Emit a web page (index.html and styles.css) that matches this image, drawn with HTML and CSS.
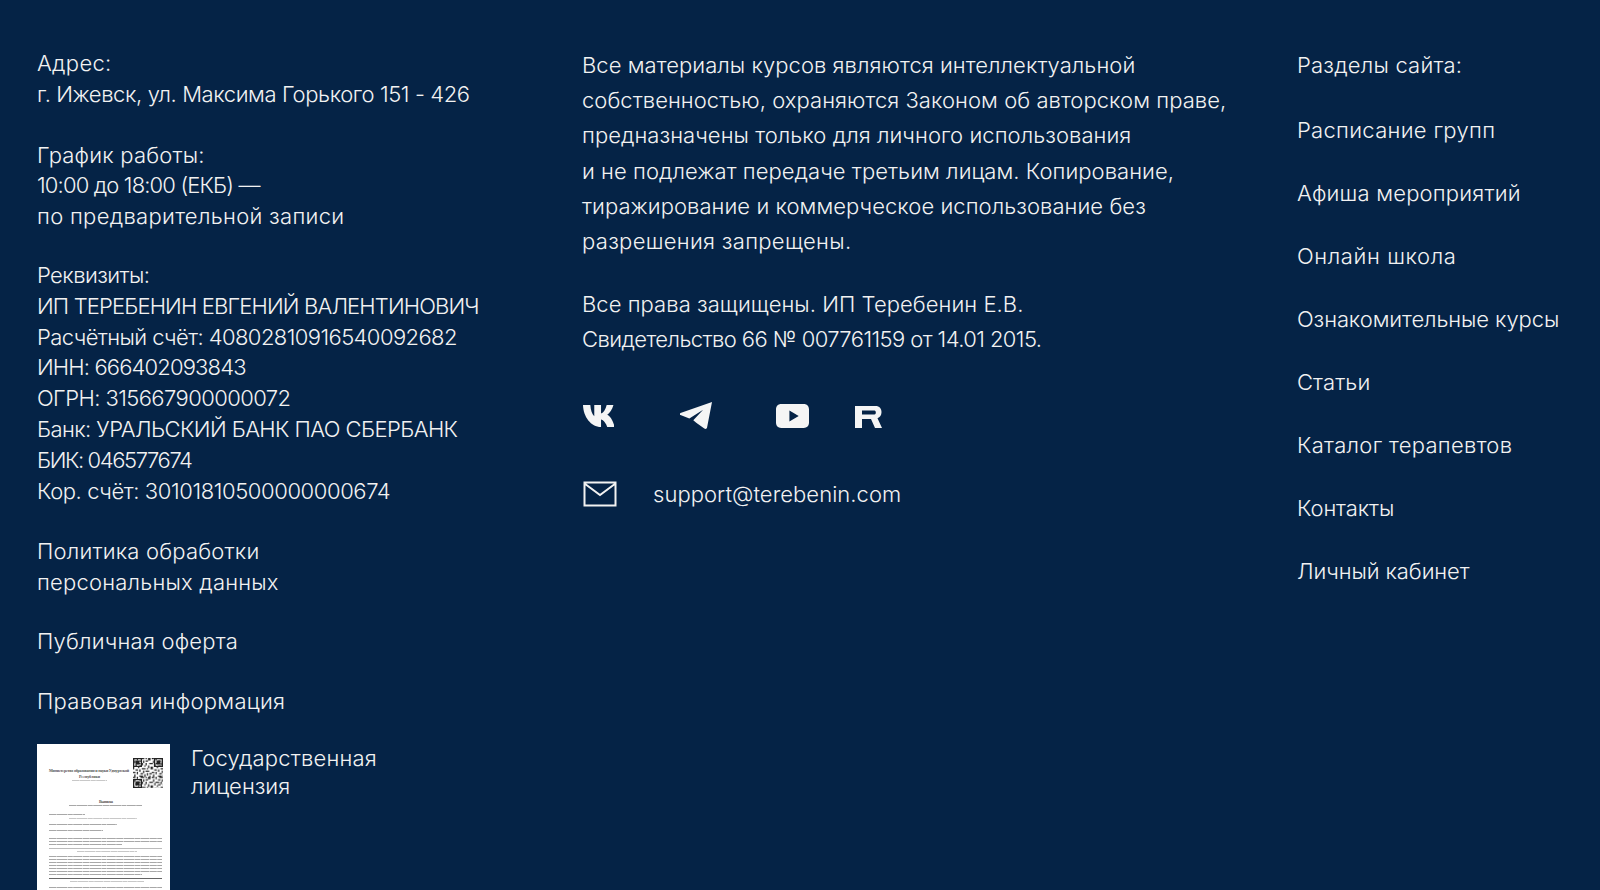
FILE: index.html
```html
<!DOCTYPE html>
<html lang="ru">
<head>
<meta charset="utf-8">
<title>Футер</title>
<link rel="stylesheet" href="styles.css">
</head>
<body>
<footer class="footer">
  <section class="col-left">
    <p class="block block-wide"><span class="ls-b">Адрес:</span><br><span class="ls-n">г. Ижевск, ул. Максима Горького 151 - 426</span></p>
    <p class="block block-narrow">График работы:<br><span class="ls-c">10:00 до 18:00 (ЕКБ) —</span><br><span class="ls-w">по предварительной записи</span></p>
    <p class="block block-wide"><span class="ls-m">Реквизиты:</span><br><span class="ls-c">ИП ТЕРЕБЕНИН ЕВГЕНИЙ ВАЛЕНТИНОВИЧ</span><br><span class="ls-m">Расчётный счёт: 40802810916540092682</span><br><span class="ls-c">ИНН: 666402093843</span><br><span class="ls-m">ОГРН: 315667900000072</span><br><span class="ls-m">Банк: УРАЛЬСКИЙ БАНК ПАО СБЕРБАНК</span><br><span class="ls-x">БИК: 046577674</span><br><span class="ls-n">Кор. счёт: 30101810500000000674</span></p>
    <p class="block block-narrow"><a href="#">Политика обработки<br>персональных данных</a></p>
    <p class="block"><a href="#">Публичная оферта</a></p>
    <p class="block block-last"><a href="#" class="ls-w">Правовая информация</a></p>
    <div class="license">
      <svg class="doc" viewBox="0 0 133 150" aria-hidden="true">
        <defs>
          <pattern id="qr" width="15" height="15" patternUnits="userSpaceOnUse" patternTransform="translate(96 14) scale(1.25)">
            <path d="M0 0h2v1H0zM3 0h1v2H3zM6 0h3v1H6zM10 0h1v1h-1zM12 0h2v2h-2zM1 2h1v2H1zM5 2h2v1H5zM8 2h1v2H8zM10 2h2v1h-2zM0 4h1v1H0zM3 4h3v1H3zM7 4h1v2H7zM10 4h1v2h-1zM13 4h2v1h-2zM2 5h1v2H2zM5 6h2v1H5zM9 6h1v1H9zM12 6h1v2h-1zM0 7h1v2H0zM4 7h1v1H4zM7 8h3v1H7zM11 8h1v1h-1zM14 7h1v2h-1zM2 9h2v1H2zM5 9h1v2H5zM10 10h3v1h-3zM8 10h1v2H8zM0 11h2v1H0zM3 11h1v2H3zM6 12h2v1H6zM11 12h1v2h-1zM13 12h2v1h-2zM1 13h1v2H1zM5 14h3v1H5zM9 13h1v2H9zM13 14h1v1h-1z" fill="#222"/>
          </pattern>
        </defs>
        <rect class="doc-paper" width="133" height="150"/>
        <text class="doc-title" x="12" y="28" textLength="80">Министерство образования и науки Удмуртской</text>
        <text class="doc-title" x="42" y="33.500" textLength="21">Республики</text>
        <line class="doc-line doc-soft" x1="35" x2="70" y1="36.500" y2="36.500"/>
        <text class="doc-title" x="62" y="59" textLength="14">Выписка</text>
        <line class="doc-line" x1="32" x2="105" y1="61.500" y2="61.500"/>
        <line class="doc-line" x1="12" x2="48" y1="70.500" y2="70.500"/>
        <line class="doc-line doc-soft" x1="32" x2="100" y1="74.500" y2="74.500"/>
        <line class="doc-line" x1="12" x2="80" y1="80.500" y2="80.500"/>
        <line class="doc-line" x1="12" x2="66" y1="86.500" y2="86.500"/>
        <line class="doc-line" x1="12" x2="125" y1="94.500" y2="94.500"/>
        <line class="doc-line" x1="12" x2="125" y1="97.500" y2="97.500"/>
        <line class="doc-line" x1="12" x2="85" y1="100.500" y2="100.500"/>
        <line class="doc-rule doc-rule-soft" x1="12" x2="125" y1="104.500" y2="104.500"/>
        <line class="doc-line doc-soft" x1="40" x2="100" y1="107.500" y2="107.500"/>
        <line class="doc-line" x1="12" x2="125" y1="112.500" y2="112.500"/>
        <line class="doc-line" x1="12" x2="125" y1="115.500" y2="115.500"/>
        <line class="doc-line" x1="12" x2="125" y1="118.500" y2="118.500"/>
        <line class="doc-line" x1="12" x2="125" y1="121.500" y2="121.500"/>
        <line class="doc-line" x1="12" x2="125" y1="124.500" y2="124.500"/>
        <line class="doc-line" x1="12" x2="125" y1="127.500" y2="127.500"/>
        <line class="doc-line" x1="12" x2="105" y1="130.500" y2="130.500"/>
        <line class="doc-rule" x1="12" x2="125" y1="134.500" y2="134.500"/>
        <line class="doc-line doc-soft" x1="33" x2="107" y1="137.500" y2="137.500"/>
        <line class="doc-line" x1="12" x2="125" y1="143.500" y2="143.500"/>
        <line class="doc-line" x1="12" x2="125" y1="146.500" y2="146.500"/>
        <line class="doc-line" x1="12" x2="125" y1="149.500" y2="149.500"/>
        <rect x="96" y="14" width="30" height="30" fill="url(#qr)"/>
        <path class="doc-finder" fill-rule="evenodd" d="M96 14h9v9h-9zm1.250 1.250v6.500h6.500v-6.500zM98.500 16.500h4v4h-4zM117 14h9v9h-9zm1.250 1.250v6.500h6.500v-6.500zM119.500 16.500h4v4h-4zM96 35h9v9h-9zm1.250 1.250v6.500h6.500v-6.500zM98.500 37.500h4v4h-4z"/>
      </svg>
      <a href="#" class="license-text">Государственная<br><span class="ls-zero">лицензия</span></a>
    </div>
  </section>
  <section class="col-mid">
    <p class="para">Все материалы курсов являются интеллектуальной<br>собственностью, охраняются Законом об авторском праве,<br>предназначены только для личного использования<br>и не подлежат передаче третьим лицам. Копирование,<br>тиражирование и коммерческое использование без<br><span class="ls-b">разрешения запрещены.</span></p>
    <p class="para">Все права защищены. ИП Теребенин Е.В.<br><span class="ls-m">Свидетельство 66 № 007761159 от 14.01 2015.</span></p>
    <div class="socials">
      <svg class="ic ic-vk" viewBox="1 2 27.500 20.500" preserveAspectRatio="none" aria-hidden="true"><path d="M1 2h6.500c.4 5 1.400 8.500 3.500 10.500V2h6v8c2.500-1 4-4 5-8h6c-1 4.500-3.500 7.500-5.500 9 2.500 1.500 5 4.500 6.500 11.500h-6.500c-1-3.500-3.500-6.500-5.500-7v7C8 22.500 1.300 13 1 2z" fill="#f5f5f5"/></svg>
      <svg class="ic ic-tg" viewBox="0.500 1 32.500 28" preserveAspectRatio="none" aria-hidden="true"><path d="M33 1 28 27.500c-.3 1.500-1.500 1.800-2.800 1L17 22.500 14 20 24 9 10 18 1 14.500C0 14 0 13 1 12.500z" fill="#f5f5f5"/></svg>
      <svg class="ic ic-yt" viewBox="1 1 32 22" preserveAspectRatio="none" aria-hidden="true"><path fill-rule="evenodd" d="M6 1h22c3 0 5 2 5 5v12c0 3-2 5-5 5H6c-3 0-5-2-5-5V6c0-3 2-5 5-5zm8 6v10l9-5z" fill="#f5f5f5"/></svg>
      <svg class="ic ic-r" viewBox="0 0 27 22" aria-hidden="true"><path fill-rule="evenodd" d="M0 0h20.500c4 0 6 2.500 6 6.300 0 3-1.500 5-4 6l4.500 9.700h-7l-4-9H7v9H0zm7 4.500v4h12.500c1.800 0 1.800-4 0-4z" fill="#f5f5f5"/></svg>
    </div>
    <a class="mail" href="#">
      <svg class="mail-ic" viewBox="0 0 34 26" aria-hidden="true"><path d="M1.500 1.500h31v23h-31zM1.500 2.500 17 14 32.500 2.500" fill="none" stroke="#f2f2f2" stroke-width="2"/></svg>
      <span>support@terebenin.com</span>
    </a>
  </section>
  <nav class="col-right">
    <p class="nav-title">Разделы сайта:</p>
    <a href="#" class="ls-p">Расписание групп</a>
    <a href="#">Афиша мероприятий</a>
    <a href="#" class="ls-o">Онлайн школа</a>
    <a href="#" class="ls-t">Ознакомительные курсы</a>
    <a href="#" class="ls-q">Статьи</a>
    <a href="#" class="ls-p">Каталог терапевтов</a>
    <a href="#" class="ls-t">Контакты</a>
    <a href="#" class="ls-t">Личный кабинет</a>
  </nav>
</footer>
</body>
</html>
```
FILE: styles.css
```css
* { box-sizing: border-box; }
html, body { margin: 0; height: 890px; overflow: hidden; }
body { background: #052346; color: #f2f2f2; font-family: "Inter", "Liberation Sans", sans-serif; font-weight: 300; font-size: 22px; }
a { color: inherit; text-decoration: none; }
p { margin: 0; }
.footer { display: grid; grid-template-columns: 545px 715px 1fr; padding: 48px 0 0 37px; height: 890px; }

.col-left { line-height: 30.800px; letter-spacing: .2px; }
.block { margin-bottom: 29px; }
.block-wide { margin-bottom: 30px; }
.block-narrow { margin-bottom: 28px; }
.block-last { margin-bottom: 27px; }

.ls-zero { letter-spacing: 0; }
.ls-b { letter-spacing: .3px; }
.ls-w { letter-spacing: .3px; }
.ls-p { letter-spacing: .3px; }
.ls-q { letter-spacing: .1px; }
.ls-o { letter-spacing: .6px; }
.ls-t { letter-spacing: -.1px; }
.ls-n { letter-spacing: -.4px; }
.ls-m { letter-spacing: -.58px; }
.ls-c { letter-spacing: -.85px; }
.ls-x { letter-spacing: -1.4px; }

.license { display: flex; gap: 21px; }
.doc { width: 133px; height: 150px; flex: none; }
.doc-paper { fill: #fff; }
.doc-title { font-family: "Liberation Serif", serif; font-size: 4px; font-weight: 700; fill: #555; letter-spacing: 0; }
.doc-line { stroke: #a8a8a8; stroke-width: 1; stroke-dasharray: 7 .4 11 .4 5 .4 9 .4; }
.doc-soft { stroke: #c8c8c8; }
.doc-rule { stroke: #666; stroke-width: 1; }
.doc-rule-soft { stroke: #bbb; }
.doc-finder { fill: #222; }
.license-text { line-height: 28px; }

.col-mid { line-height: 35.200px; letter-spacing: .05px; }
.para { margin-bottom: 28px; }
.socials { display: flex; align-items: center; margin-top: 44px; height: 28px; }
.ic { display: block; flex: none; }
.ic-vk { width: 31px; height: 22px; margin: 0 66px 0 1px; }
.ic-tg { width: 32px; height: 27px; margin-right: 64px; }
.ic-yt { width: 33px; height: 24px; margin-right: 46px; }
.ic-r { width: 27px; height: 22px; margin-top: 2px; }
.mail { display: flex; align-items: center; gap: 36px; margin: 47px 0 0 1px; }
.mail-ic { width: 34px; height: 26px; flex: none; }

.col-right { display: flex; flex-direction: column; gap: 35px; line-height: 28px; letter-spacing: .2px; padding-top: 3px; }
.nav-title { margin-bottom: 2px; }
```
